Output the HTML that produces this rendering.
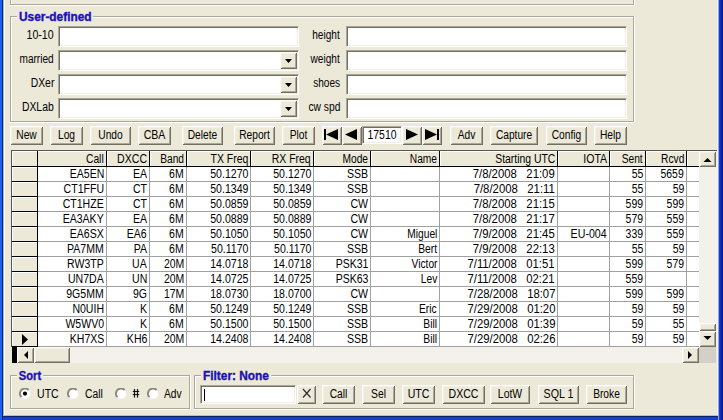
<!DOCTYPE html>
<html><head><meta charset="utf-8"><style>
html,body{margin:0;padding:0}
body{width:723px;height:420px;overflow:hidden;position:relative;background:#ECE9D8;font-family:"Liberation Sans",sans-serif;font-size:12px;color:#000}
div{position:absolute;box-sizing:content-box}
.t{white-space:nowrap}
.b{font-weight:bold;font-size:12px;-webkit-text-stroke:0.35px #1A10B8;transform-origin:0 50%}
</style></head><body>
<div style="left:0px;top:0px;width:2px;height:420px;background:#1B62F0"></div>
<div style="left:2px;top:0px;width:1px;height:420px;background:#0A266E"></div>
<div style="left:3px;top:0px;width:1px;height:416px;background:#A8B0C8"></div>
<div style="left:4px;top:0px;width:1px;height:415px;background:#fff"></div>
<div style="left:717px;top:0px;width:1px;height:416px;background:#F4F6FC"></div>
<div style="left:718px;top:0px;width:1px;height:420px;background:#8CA4EC"></div>
<div style="left:719px;top:0;width:4px;height:420px;background:linear-gradient(to right,#1E44CC,#001090)"></div>
<div style="left:3px;top:415px;width:715px;height:1px;background:#B8BCC8"></div>
<div style="left:3px;top:416px;width:715px;height:1px;background:#0A1F6E"></div>
<div style="left:3px;top:417px;width:715px;height:3px;background:#1A40C8"></div>
<div style="left:10px;top:-10px;width:624px;height:1px;background:#ACA899"></div>
<div style="left:10px;top:-10px;width:1px;height:15px;background:#ACA899"></div>
<div style="left:10px;top:4px;width:624px;height:1px;background:#ACA899"></div>
<div style="left:633px;top:-10px;width:1px;height:15px;background:#ACA899"></div>
<div style="left:11px;top:-9px;width:622px;height:1px;background:#fff"></div>
<div style="left:11px;top:-9px;width:1px;height:13px;background:#fff"></div>
<div style="left:10px;top:5px;width:625px;height:1px;background:#fff"></div>
<div style="left:634px;top:-10px;width:1px;height:16px;background:#fff"></div>
<div style="left:10px;top:16px;width:624px;height:1px;background:#ACA899"></div>
<div style="left:10px;top:16px;width:1px;height:106px;background:#ACA899"></div>
<div style="left:10px;top:121px;width:624px;height:1px;background:#ACA899"></div>
<div style="left:633px;top:16px;width:1px;height:106px;background:#ACA899"></div>
<div style="left:11px;top:17px;width:622px;height:1px;background:#fff"></div>
<div style="left:11px;top:17px;width:1px;height:104px;background:#fff"></div>
<div style="left:10px;top:122px;width:625px;height:1px;background:#fff"></div>
<div style="left:634px;top:16px;width:1px;height:107px;background:#fff"></div>
<div class="t b" style="left:17px;top:10px;padding:0 2px;line-height:14px;transform:scaleX(0.99);background:#ECE9D8;color:#1A10B8">User-defined</div>
<div class="t" style="right:669px;top:29px;line-height:13px;text-align:right;transform:scaleX(0.887);transform-origin:100% 50%;">10-10</div>
<div style="left:58px;top:26px;width:237px;height:17px;background:#fff;border-style:solid;border-width:1px;border-color:#ACA899 #fff #fff #ACA899;box-shadow:inset 1px 1px 0 #716F64, inset -1px -1px 0 #F1EFE2;padding:1px"></div>
<div class="t" style="right:383px;top:29px;line-height:13px;text-align:right;transform:scaleX(0.840);transform-origin:100% 50%;">height</div>
<div style="left:346px;top:26px;width:277px;height:17px;background:#fff;border-style:solid;border-width:1px;border-color:#ACA899 #fff #fff #ACA899;box-shadow:inset 1px 1px 0 #716F64, inset -1px -1px 0 #F1EFE2;padding:1px"></div>
<div class="t" style="right:669px;top:53px;line-height:13px;text-align:right;transform:scaleX(0.840);transform-origin:100% 50%;">married</div>
<div style="left:58px;top:50px;width:237px;height:17px;background:#fff;border-style:solid;border-width:1px;border-color:#ACA899 #fff #fff #ACA899;box-shadow:inset 1px 1px 0 #716F64, inset -1px -1px 0 #F1EFE2;padding:1px"></div>
<div style="left:280px;top:52px;width:17px;height:17px;background:#ECE9D8;box-shadow:inset 1px 1px 0 #fff, inset -1px -1px 0 #716F64, inset 2px 2px 0 #F1EFE2, inset -2px -2px 0 #ACA899"></div>
<svg style="position:absolute;left:285px;top:59px" width="7" height="4"><polygon points="0,0 7,0 3.5,4" fill="#000"/></svg>
<div class="t" style="right:383px;top:53px;line-height:13px;text-align:right;transform:scaleX(0.840);transform-origin:100% 50%;">weight</div>
<div style="left:346px;top:50px;width:277px;height:17px;background:#fff;border-style:solid;border-width:1px;border-color:#ACA899 #fff #fff #ACA899;box-shadow:inset 1px 1px 0 #716F64, inset -1px -1px 0 #F1EFE2;padding:1px"></div>
<div class="t" style="right:669px;top:77px;line-height:13px;text-align:right;transform:scaleX(0.864);transform-origin:100% 50%;">DXer</div>
<div style="left:58px;top:74px;width:237px;height:17px;background:#fff;border-style:solid;border-width:1px;border-color:#ACA899 #fff #fff #ACA899;box-shadow:inset 1px 1px 0 #716F64, inset -1px -1px 0 #F1EFE2;padding:1px"></div>
<div style="left:280px;top:76px;width:17px;height:17px;background:#ECE9D8;box-shadow:inset 1px 1px 0 #fff, inset -1px -1px 0 #716F64, inset 2px 2px 0 #F1EFE2, inset -2px -2px 0 #ACA899"></div>
<svg style="position:absolute;left:285px;top:83px" width="7" height="4"><polygon points="0,0 7,0 3.5,4" fill="#000"/></svg>
<div class="t" style="right:383px;top:77px;line-height:13px;text-align:right;transform:scaleX(0.840);transform-origin:100% 50%;">shoes</div>
<div style="left:346px;top:74px;width:277px;height:17px;background:#fff;border-style:solid;border-width:1px;border-color:#ACA899 #fff #fff #ACA899;box-shadow:inset 1px 1px 0 #716F64, inset -1px -1px 0 #F1EFE2;padding:1px"></div>
<div class="t" style="right:669px;top:101px;line-height:13px;text-align:right;transform:scaleX(0.865);transform-origin:100% 50%;">DXLab</div>
<div style="left:58px;top:98px;width:237px;height:17px;background:#fff;border-style:solid;border-width:1px;border-color:#ACA899 #fff #fff #ACA899;box-shadow:inset 1px 1px 0 #716F64, inset -1px -1px 0 #F1EFE2;padding:1px"></div>
<div style="left:280px;top:100px;width:17px;height:17px;background:#ECE9D8;box-shadow:inset 1px 1px 0 #fff, inset -1px -1px 0 #716F64, inset 2px 2px 0 #F1EFE2, inset -2px -2px 0 #ACA899"></div>
<svg style="position:absolute;left:285px;top:107px" width="7" height="4"><polygon points="0,0 7,0 3.5,4" fill="#000"/></svg>
<div class="t" style="right:383px;top:101px;line-height:13px;text-align:right;transform:scaleX(0.854);transform-origin:100% 50%;">cw spd</div>
<div style="left:346px;top:98px;width:277px;height:17px;background:#fff;border-style:solid;border-width:1px;border-color:#ACA899 #fff #fff #ACA899;box-shadow:inset 1px 1px 0 #716F64, inset -1px -1px 0 #F1EFE2;padding:1px"></div>
<div style="left:10px;top:126px;width:33px;height:19px;background:#ECE9D8;box-shadow:inset 1px 1px 0 #fff, inset -1px -1px 0 #716F64, inset 2px 2px 0 #F1EFE2, inset -2px -2px 0 #ACA899"></div>
<div class="t" style="left:10px;top:129px;width:33px;line-height:13px;text-align:center;transform:scaleX(0.854);">New</div>
<div style="left:50px;top:126px;width:33px;height:19px;background:#ECE9D8;box-shadow:inset 1px 1px 0 #fff, inset -1px -1px 0 #716F64, inset 2px 2px 0 #F1EFE2, inset -2px -2px 0 #ACA899"></div>
<div class="t" style="left:50px;top:129px;width:33px;line-height:13px;text-align:center;transform:scaleX(0.853);">Log</div>
<div style="left:90px;top:126px;width:41px;height:19px;background:#ECE9D8;box-shadow:inset 1px 1px 0 #fff, inset -1px -1px 0 #716F64, inset 2px 2px 0 #F1EFE2, inset -2px -2px 0 #ACA899"></div>
<div class="t" style="left:90px;top:129px;width:41px;line-height:13px;text-align:center;transform:scaleX(0.852);">Undo</div>
<div style="left:138px;top:126px;width:33px;height:19px;background:#ECE9D8;box-shadow:inset 1px 1px 0 #fff, inset -1px -1px 0 #716F64, inset 2px 2px 0 #F1EFE2, inset -2px -2px 0 #ACA899"></div>
<div class="t" style="left:138px;top:129px;width:33px;line-height:13px;text-align:center;transform:scaleX(0.880);">CBA</div>
<div style="left:182px;top:126px;width:41px;height:19px;background:#ECE9D8;box-shadow:inset 1px 1px 0 #fff, inset -1px -1px 0 #716F64, inset 2px 2px 0 #F1EFE2, inset -2px -2px 0 #ACA899"></div>
<div class="t" style="left:182px;top:129px;width:41px;line-height:13px;text-align:center;transform:scaleX(0.850);">Delete</div>
<div style="left:234px;top:126px;width:41px;height:19px;background:#ECE9D8;box-shadow:inset 1px 1px 0 #fff, inset -1px -1px 0 #716F64, inset 2px 2px 0 #F1EFE2, inset -2px -2px 0 #ACA899"></div>
<div class="t" style="left:234px;top:129px;width:41px;line-height:13px;text-align:center;transform:scaleX(0.850);">Report</div>
<div style="left:282px;top:126px;width:33px;height:19px;background:#ECE9D8;box-shadow:inset 1px 1px 0 #fff, inset -1px -1px 0 #716F64, inset 2px 2px 0 #F1EFE2, inset -2px -2px 0 #ACA899"></div>
<div class="t" style="left:282px;top:129px;width:33px;line-height:13px;text-align:center;transform:scaleX(0.855);">Plot</div>
<div style="left:450px;top:126px;width:33px;height:19px;background:#ECE9D8;box-shadow:inset 1px 1px 0 #fff, inset -1px -1px 0 #716F64, inset 2px 2px 0 #F1EFE2, inset -2px -2px 0 #ACA899"></div>
<div class="t" style="left:450px;top:129px;width:33px;line-height:13px;text-align:center;transform:scaleX(0.855);">Adv</div>
<div style="left:490px;top:126px;width:48px;height:19px;background:#ECE9D8;box-shadow:inset 1px 1px 0 #fff, inset -1px -1px 0 #716F64, inset 2px 2px 0 #F1EFE2, inset -2px -2px 0 #ACA899"></div>
<div class="t" style="left:490px;top:129px;width:48px;line-height:13px;text-align:center;transform:scaleX(0.848);">Capture</div>
<div style="left:546px;top:126px;width:41px;height:19px;background:#ECE9D8;box-shadow:inset 1px 1px 0 #fff, inset -1px -1px 0 #716F64, inset 2px 2px 0 #F1EFE2, inset -2px -2px 0 #ACA899"></div>
<div class="t" style="left:546px;top:129px;width:41px;line-height:13px;text-align:center;transform:scaleX(0.850);">Config</div>
<div style="left:594px;top:126px;width:33px;height:19px;background:#ECE9D8;box-shadow:inset 1px 1px 0 #fff, inset -1px -1px 0 #716F64, inset 2px 2px 0 #F1EFE2, inset -2px -2px 0 #ACA899"></div>
<div class="t" style="left:594px;top:129px;width:33px;line-height:13px;text-align:center;transform:scaleX(0.854);">Help</div>
<div style="left:322px;top:126px;width:20px;height:19px;background:#ECE9D8;box-shadow:inset 1px 1px 0 #fff, inset -1px -1px 0 #716F64, inset 2px 2px 0 #F1EFE2, inset -2px -2px 0 #ACA899"></div>
<div style="left:342px;top:126px;width:20px;height:19px;background:#ECE9D8;box-shadow:inset 1px 1px 0 #fff, inset -1px -1px 0 #716F64, inset 2px 2px 0 #F1EFE2, inset -2px -2px 0 #ACA899"></div>
<div style="left:362px;top:126px;width:36px;height:14px;background:#fff;border-style:solid;border-width:1px;border-color:#ACA899 #fff #fff #ACA899;box-shadow:inset 1px 1px 0 #716F64, inset -1px -1px 0 #F1EFE2;padding:1px"></div>
<div class="t" style="left:362px;top:129px;width:40px;line-height:13px;text-align:center;transform:scaleX(0.870);">17510</div>
<div style="left:402px;top:126px;width:20px;height:19px;background:#ECE9D8;box-shadow:inset 1px 1px 0 #fff, inset -1px -1px 0 #716F64, inset 2px 2px 0 #F1EFE2, inset -2px -2px 0 #ACA899"></div>
<div style="left:422px;top:126px;width:20px;height:19px;background:#ECE9D8;box-shadow:inset 1px 1px 0 #fff, inset -1px -1px 0 #716F64, inset 2px 2px 0 #F1EFE2, inset -2px -2px 0 #ACA899"></div>
<svg style="position:absolute;left:0;top:0" width="723" height="420"><rect x="324" y="129" width="2" height="11" fill="#000"/><polygon points="326,134.5 338,129 338,140" fill="#000"/><polygon points="345,134.5 357,129 357,140" fill="#000"/><polygon points="418,134.5 406,129 406,140" fill="#000"/><polygon points="437,134.5 425,129 425,140" fill="#000"/><rect x="437" y="129" width="2" height="11" fill="#000"/></svg>
<div style="left:38px;top:167px;width:661px;height:180px;background:#fff"></div>
<div style="left:12px;top:151px;width:687px;height:15px;background:#ECE9D8"></div>
<div style="left:12px;top:167px;width:25px;height:180px;background:#ECE9D8"></div>
<div style="left:11px;top:150px;width:706px;height:1px;background:#555"></div>
<div style="left:11px;top:150px;width:1px;height:197px;background:#555"></div>
<div style="left:12px;top:151px;width:687px;height:1px;background:#fff"></div>
<div style="left:12px;top:151px;width:1px;height:196px;background:#fff"></div>
<div style="left:12px;top:167px;width:25px;height:1px;background:#fff"></div>
<div style="left:12px;top:182px;width:25px;height:1px;background:#fff"></div>
<div style="left:12px;top:197px;width:25px;height:1px;background:#fff"></div>
<div style="left:12px;top:212px;width:25px;height:1px;background:#fff"></div>
<div style="left:12px;top:227px;width:25px;height:1px;background:#fff"></div>
<div style="left:12px;top:242px;width:25px;height:1px;background:#fff"></div>
<div style="left:12px;top:257px;width:25px;height:1px;background:#fff"></div>
<div style="left:12px;top:272px;width:25px;height:1px;background:#fff"></div>
<div style="left:12px;top:287px;width:25px;height:1px;background:#fff"></div>
<div style="left:12px;top:302px;width:25px;height:1px;background:#fff"></div>
<div style="left:12px;top:317px;width:25px;height:1px;background:#fff"></div>
<div style="left:12px;top:332px;width:25px;height:1px;background:#fff"></div>
<div style="left:38px;top:181px;width:661px;height:1px;background:#A0A0A0"></div>
<div style="left:12px;top:181px;width:26px;height:1px;background:#000"></div>
<div style="left:38px;top:196px;width:661px;height:1px;background:#A0A0A0"></div>
<div style="left:12px;top:196px;width:26px;height:1px;background:#000"></div>
<div style="left:38px;top:211px;width:661px;height:1px;background:#A0A0A0"></div>
<div style="left:12px;top:211px;width:26px;height:1px;background:#000"></div>
<div style="left:38px;top:226px;width:661px;height:1px;background:#A0A0A0"></div>
<div style="left:12px;top:226px;width:26px;height:1px;background:#000"></div>
<div style="left:38px;top:241px;width:661px;height:1px;background:#A0A0A0"></div>
<div style="left:12px;top:241px;width:26px;height:1px;background:#000"></div>
<div style="left:38px;top:256px;width:661px;height:1px;background:#A0A0A0"></div>
<div style="left:12px;top:256px;width:26px;height:1px;background:#000"></div>
<div style="left:38px;top:271px;width:661px;height:1px;background:#A0A0A0"></div>
<div style="left:12px;top:271px;width:26px;height:1px;background:#000"></div>
<div style="left:38px;top:286px;width:661px;height:1px;background:#A0A0A0"></div>
<div style="left:12px;top:286px;width:26px;height:1px;background:#000"></div>
<div style="left:38px;top:301px;width:661px;height:1px;background:#A0A0A0"></div>
<div style="left:12px;top:301px;width:26px;height:1px;background:#000"></div>
<div style="left:38px;top:316px;width:661px;height:1px;background:#A0A0A0"></div>
<div style="left:12px;top:316px;width:26px;height:1px;background:#000"></div>
<div style="left:38px;top:331px;width:661px;height:1px;background:#A0A0A0"></div>
<div style="left:12px;top:331px;width:26px;height:1px;background:#000"></div>
<div style="left:38px;top:346px;width:661px;height:1px;background:#A0A0A0"></div>
<div style="left:12px;top:346px;width:26px;height:1px;background:#000"></div>
<div style="left:12px;top:166px;width:687px;height:1px;background:#000"></div>
<div style="left:37px;top:151px;width:1px;height:196px;background:#000"></div>
<div style="left:106px;top:151px;width:1px;height:15px;background:#000"></div>
<div style="left:107px;top:151px;width:1px;height:15px;background:#fff"></div>
<div style="left:106px;top:167px;width:1px;height:180px;background:#A0A0A0"></div>
<div style="left:149px;top:151px;width:1px;height:15px;background:#000"></div>
<div style="left:150px;top:151px;width:1px;height:15px;background:#fff"></div>
<div style="left:149px;top:167px;width:1px;height:180px;background:#A0A0A0"></div>
<div style="left:186px;top:151px;width:1px;height:15px;background:#000"></div>
<div style="left:187px;top:151px;width:1px;height:15px;background:#fff"></div>
<div style="left:186px;top:167px;width:1px;height:180px;background:#A0A0A0"></div>
<div style="left:250px;top:151px;width:1px;height:15px;background:#000"></div>
<div style="left:251px;top:151px;width:1px;height:15px;background:#fff"></div>
<div style="left:250px;top:167px;width:1px;height:180px;background:#A0A0A0"></div>
<div style="left:313px;top:151px;width:1px;height:15px;background:#000"></div>
<div style="left:314px;top:151px;width:1px;height:15px;background:#fff"></div>
<div style="left:313px;top:167px;width:1px;height:180px;background:#A0A0A0"></div>
<div style="left:370px;top:151px;width:1px;height:15px;background:#000"></div>
<div style="left:371px;top:151px;width:1px;height:15px;background:#fff"></div>
<div style="left:370px;top:167px;width:1px;height:180px;background:#A0A0A0"></div>
<div style="left:439px;top:151px;width:1px;height:15px;background:#000"></div>
<div style="left:440px;top:151px;width:1px;height:15px;background:#fff"></div>
<div style="left:439px;top:167px;width:1px;height:180px;background:#A0A0A0"></div>
<div style="left:557px;top:151px;width:1px;height:15px;background:#000"></div>
<div style="left:558px;top:151px;width:1px;height:15px;background:#fff"></div>
<div style="left:557px;top:167px;width:1px;height:180px;background:#A0A0A0"></div>
<div style="left:609px;top:151px;width:1px;height:15px;background:#000"></div>
<div style="left:610px;top:151px;width:1px;height:15px;background:#fff"></div>
<div style="left:609px;top:167px;width:1px;height:180px;background:#A0A0A0"></div>
<div style="left:645px;top:151px;width:1px;height:15px;background:#000"></div>
<div style="left:646px;top:151px;width:1px;height:15px;background:#fff"></div>
<div style="left:645px;top:167px;width:1px;height:180px;background:#A0A0A0"></div>
<div style="left:686px;top:151px;width:1px;height:15px;background:#000"></div>
<div style="left:687px;top:151px;width:1px;height:15px;background:#fff"></div>
<div style="left:686px;top:167px;width:1px;height:180px;background:#A0A0A0"></div>
<div class="t" style="right:619px;top:153px;line-height:13px;text-align:right;transform:scaleX(0.857);transform-origin:100% 50%;">Call</div>
<div class="t" style="right:576px;top:153px;line-height:13px;text-align:right;transform:scaleX(0.880);transform-origin:100% 50%;">DXCC</div>
<div class="t" style="right:539px;top:153px;line-height:13px;text-align:right;transform:scaleX(0.851);transform-origin:100% 50%;">Band</div>
<div class="t" style="right:475px;top:153px;line-height:13px;text-align:right;transform:scaleX(0.873);transform-origin:100% 50%;">TX Freq</div>
<div class="t" style="right:412px;top:153px;line-height:13px;text-align:right;transform:scaleX(0.873);transform-origin:100% 50%;">RX Freq</div>
<div class="t" style="right:355px;top:153px;line-height:13px;text-align:right;transform:scaleX(0.853);transform-origin:100% 50%;">Mode</div>
<div class="t" style="right:286px;top:153px;line-height:13px;text-align:right;transform:scaleX(0.851);transform-origin:100% 50%;">Name</div>
<div class="t" style="right:168px;top:153px;line-height:13px;text-align:right;transform:scaleX(0.867);transform-origin:100% 50%;">Starting UTC</div>
<div class="t" style="right:116px;top:153px;line-height:13px;text-align:right;transform:scaleX(0.880);transform-origin:100% 50%;">IOTA</div>
<div class="t" style="right:80px;top:153px;line-height:13px;text-align:right;transform:scaleX(0.853);transform-origin:100% 50%;">Sent</div>
<div class="t" style="right:39px;top:153px;line-height:13px;text-align:right;transform:scaleX(0.853);transform-origin:100% 50%;">Rcvd</div>
<div class="t" style="right:619px;top:168px;line-height:13px;text-align:right;transform:scaleX(0.878);transform-origin:100% 50%;">EA5EN</div>
<div class="t" style="right:576px;top:168px;line-height:13px;text-align:right;transform:scaleX(0.880);transform-origin:100% 50%;">EA</div>
<div class="t" style="right:539px;top:168px;line-height:13px;text-align:right;transform:scaleX(0.876);transform-origin:100% 50%;">6M</div>
<div class="t" style="right:475px;top:168px;line-height:13px;text-align:right;transform:scaleX(0.880);transform-origin:100% 50%;">50.1270</div>
<div class="t" style="right:412px;top:168px;line-height:13px;text-align:right;transform:scaleX(0.880);transform-origin:100% 50%;">50.1270</div>
<div class="t" style="right:355px;top:168px;line-height:13px;text-align:right;transform:scaleX(0.880);transform-origin:100% 50%;">SSB</div>
<div class="t" style="right:168px;top:168px;line-height:13px;text-align:right;transform:scaleX(0.946);transform-origin:100% 50%;">7/8/2008&nbsp;&nbsp; 21:09</div>
<div class="t" style="right:80px;top:168px;line-height:13px;text-align:right;transform:scaleX(0.870);transform-origin:100% 50%;">55</div>
<div class="t" style="right:39px;top:168px;line-height:13px;text-align:right;transform:scaleX(0.870);transform-origin:100% 50%;">5659</div>
<div class="t" style="right:619px;top:183px;line-height:13px;text-align:right;transform:scaleX(0.879);transform-origin:100% 50%;">CT1FFU</div>
<div class="t" style="right:576px;top:183px;line-height:13px;text-align:right;transform:scaleX(0.880);transform-origin:100% 50%;">CT</div>
<div class="t" style="right:539px;top:183px;line-height:13px;text-align:right;transform:scaleX(0.876);transform-origin:100% 50%;">6M</div>
<div class="t" style="right:475px;top:183px;line-height:13px;text-align:right;transform:scaleX(0.880);transform-origin:100% 50%;">50.1349</div>
<div class="t" style="right:412px;top:183px;line-height:13px;text-align:right;transform:scaleX(0.880);transform-origin:100% 50%;">50.1349</div>
<div class="t" style="right:355px;top:183px;line-height:13px;text-align:right;transform:scaleX(0.880);transform-origin:100% 50%;">SSB</div>
<div class="t" style="right:168px;top:183px;line-height:13px;text-align:right;transform:scaleX(0.946);transform-origin:100% 50%;">7/8/2008&nbsp;&nbsp; 21:11</div>
<div class="t" style="right:80px;top:183px;line-height:13px;text-align:right;transform:scaleX(0.870);transform-origin:100% 50%;">55</div>
<div class="t" style="right:39px;top:183px;line-height:13px;text-align:right;transform:scaleX(0.870);transform-origin:100% 50%;">59</div>
<div class="t" style="right:619px;top:198px;line-height:13px;text-align:right;transform:scaleX(0.879);transform-origin:100% 50%;">CT1HZE</div>
<div class="t" style="right:576px;top:198px;line-height:13px;text-align:right;transform:scaleX(0.880);transform-origin:100% 50%;">CT</div>
<div class="t" style="right:539px;top:198px;line-height:13px;text-align:right;transform:scaleX(0.876);transform-origin:100% 50%;">6M</div>
<div class="t" style="right:475px;top:198px;line-height:13px;text-align:right;transform:scaleX(0.880);transform-origin:100% 50%;">50.0859</div>
<div class="t" style="right:412px;top:198px;line-height:13px;text-align:right;transform:scaleX(0.880);transform-origin:100% 50%;">50.0859</div>
<div class="t" style="right:355px;top:198px;line-height:13px;text-align:right;transform:scaleX(0.880);transform-origin:100% 50%;">CW</div>
<div class="t" style="right:168px;top:198px;line-height:13px;text-align:right;transform:scaleX(0.946);transform-origin:100% 50%;">7/8/2008&nbsp;&nbsp; 21:15</div>
<div class="t" style="right:80px;top:198px;line-height:13px;text-align:right;transform:scaleX(0.870);transform-origin:100% 50%;">599</div>
<div class="t" style="right:39px;top:198px;line-height:13px;text-align:right;transform:scaleX(0.870);transform-origin:100% 50%;">599</div>
<div class="t" style="right:619px;top:213px;line-height:13px;text-align:right;transform:scaleX(0.879);transform-origin:100% 50%;">EA3AKY</div>
<div class="t" style="right:576px;top:213px;line-height:13px;text-align:right;transform:scaleX(0.880);transform-origin:100% 50%;">EA</div>
<div class="t" style="right:539px;top:213px;line-height:13px;text-align:right;transform:scaleX(0.876);transform-origin:100% 50%;">6M</div>
<div class="t" style="right:475px;top:213px;line-height:13px;text-align:right;transform:scaleX(0.880);transform-origin:100% 50%;">50.0889</div>
<div class="t" style="right:412px;top:213px;line-height:13px;text-align:right;transform:scaleX(0.880);transform-origin:100% 50%;">50.0889</div>
<div class="t" style="right:355px;top:213px;line-height:13px;text-align:right;transform:scaleX(0.880);transform-origin:100% 50%;">CW</div>
<div class="t" style="right:168px;top:213px;line-height:13px;text-align:right;transform:scaleX(0.946);transform-origin:100% 50%;">7/8/2008&nbsp;&nbsp; 21:17</div>
<div class="t" style="right:80px;top:213px;line-height:13px;text-align:right;transform:scaleX(0.870);transform-origin:100% 50%;">579</div>
<div class="t" style="right:39px;top:213px;line-height:13px;text-align:right;transform:scaleX(0.870);transform-origin:100% 50%;">559</div>
<div class="t" style="right:619px;top:228px;line-height:13px;text-align:right;transform:scaleX(0.878);transform-origin:100% 50%;">EA6SX</div>
<div class="t" style="right:576px;top:228px;line-height:13px;text-align:right;transform:scaleX(0.877);transform-origin:100% 50%;">EA6</div>
<div class="t" style="right:539px;top:228px;line-height:13px;text-align:right;transform:scaleX(0.876);transform-origin:100% 50%;">6M</div>
<div class="t" style="right:475px;top:228px;line-height:13px;text-align:right;transform:scaleX(0.880);transform-origin:100% 50%;">50.1050</div>
<div class="t" style="right:412px;top:228px;line-height:13px;text-align:right;transform:scaleX(0.880);transform-origin:100% 50%;">50.1050</div>
<div class="t" style="right:355px;top:228px;line-height:13px;text-align:right;transform:scaleX(0.880);transform-origin:100% 50%;">CW</div>
<div class="t" style="right:286px;top:228px;line-height:13px;text-align:right;transform:scaleX(0.851);transform-origin:100% 50%;">Miguel</div>
<div class="t" style="right:168px;top:228px;line-height:13px;text-align:right;transform:scaleX(0.946);transform-origin:100% 50%;">7/9/2008&nbsp;&nbsp; 21:45</div>
<div class="t" style="right:116px;top:228px;line-height:13px;text-align:right;transform:scaleX(0.887);transform-origin:100% 50%;">EU-004</div>
<div class="t" style="right:80px;top:228px;line-height:13px;text-align:right;transform:scaleX(0.870);transform-origin:100% 50%;">339</div>
<div class="t" style="right:39px;top:228px;line-height:13px;text-align:right;transform:scaleX(0.870);transform-origin:100% 50%;">559</div>
<div class="t" style="right:619px;top:243px;line-height:13px;text-align:right;transform:scaleX(0.878);transform-origin:100% 50%;">PA7MM</div>
<div class="t" style="right:576px;top:243px;line-height:13px;text-align:right;transform:scaleX(0.880);transform-origin:100% 50%;">PA</div>
<div class="t" style="right:539px;top:243px;line-height:13px;text-align:right;transform:scaleX(0.876);transform-origin:100% 50%;">6M</div>
<div class="t" style="right:475px;top:243px;line-height:13px;text-align:right;transform:scaleX(0.880);transform-origin:100% 50%;">50.1170</div>
<div class="t" style="right:412px;top:243px;line-height:13px;text-align:right;transform:scaleX(0.880);transform-origin:100% 50%;">50.1170</div>
<div class="t" style="right:355px;top:243px;line-height:13px;text-align:right;transform:scaleX(0.880);transform-origin:100% 50%;">SSB</div>
<div class="t" style="right:286px;top:243px;line-height:13px;text-align:right;transform:scaleX(0.855);transform-origin:100% 50%;">Bert</div>
<div class="t" style="right:168px;top:243px;line-height:13px;text-align:right;transform:scaleX(0.946);transform-origin:100% 50%;">7/9/2008&nbsp;&nbsp; 22:13</div>
<div class="t" style="right:80px;top:243px;line-height:13px;text-align:right;transform:scaleX(0.870);transform-origin:100% 50%;">55</div>
<div class="t" style="right:39px;top:243px;line-height:13px;text-align:right;transform:scaleX(0.870);transform-origin:100% 50%;">59</div>
<div class="t" style="right:619px;top:258px;line-height:13px;text-align:right;transform:scaleX(0.878);transform-origin:100% 50%;">RW3TP</div>
<div class="t" style="right:576px;top:258px;line-height:13px;text-align:right;transform:scaleX(0.880);transform-origin:100% 50%;">UA</div>
<div class="t" style="right:539px;top:258px;line-height:13px;text-align:right;transform:scaleX(0.874);transform-origin:100% 50%;">20M</div>
<div class="t" style="right:475px;top:258px;line-height:13px;text-align:right;transform:scaleX(0.880);transform-origin:100% 50%;">14.0718</div>
<div class="t" style="right:412px;top:258px;line-height:13px;text-align:right;transform:scaleX(0.880);transform-origin:100% 50%;">14.0718</div>
<div class="t" style="right:355px;top:258px;line-height:13px;text-align:right;transform:scaleX(0.876);transform-origin:100% 50%;">PSK31</div>
<div class="t" style="right:286px;top:258px;line-height:13px;text-align:right;transform:scaleX(0.850);transform-origin:100% 50%;">Victor</div>
<div class="t" style="right:168px;top:258px;line-height:13px;text-align:right;transform:scaleX(0.941);transform-origin:100% 50%;">7/11/2008&nbsp;&nbsp; 01:51</div>
<div class="t" style="right:80px;top:258px;line-height:13px;text-align:right;transform:scaleX(0.870);transform-origin:100% 50%;">599</div>
<div class="t" style="right:39px;top:258px;line-height:13px;text-align:right;transform:scaleX(0.870);transform-origin:100% 50%;">579</div>
<div class="t" style="right:619px;top:273px;line-height:13px;text-align:right;transform:scaleX(0.878);transform-origin:100% 50%;">UN7DA</div>
<div class="t" style="right:576px;top:273px;line-height:13px;text-align:right;transform:scaleX(0.880);transform-origin:100% 50%;">UN</div>
<div class="t" style="right:539px;top:273px;line-height:13px;text-align:right;transform:scaleX(0.874);transform-origin:100% 50%;">20M</div>
<div class="t" style="right:475px;top:273px;line-height:13px;text-align:right;transform:scaleX(0.880);transform-origin:100% 50%;">14.0725</div>
<div class="t" style="right:412px;top:273px;line-height:13px;text-align:right;transform:scaleX(0.880);transform-origin:100% 50%;">14.0725</div>
<div class="t" style="right:355px;top:273px;line-height:13px;text-align:right;transform:scaleX(0.876);transform-origin:100% 50%;">PSK63</div>
<div class="t" style="right:286px;top:273px;line-height:13px;text-align:right;transform:scaleX(0.854);transform-origin:100% 50%;">Lev</div>
<div class="t" style="right:168px;top:273px;line-height:13px;text-align:right;transform:scaleX(0.941);transform-origin:100% 50%;">7/11/2008&nbsp;&nbsp; 02:21</div>
<div class="t" style="right:80px;top:273px;line-height:13px;text-align:right;transform:scaleX(0.870);transform-origin:100% 50%;">559</div>
<div class="t" style="right:619px;top:288px;line-height:13px;text-align:right;transform:scaleX(0.877);transform-origin:100% 50%;">9G5MM</div>
<div class="t" style="right:576px;top:288px;line-height:13px;text-align:right;transform:scaleX(0.876);transform-origin:100% 50%;">9G</div>
<div class="t" style="right:539px;top:288px;line-height:13px;text-align:right;transform:scaleX(0.874);transform-origin:100% 50%;">17M</div>
<div class="t" style="right:475px;top:288px;line-height:13px;text-align:right;transform:scaleX(0.880);transform-origin:100% 50%;">18.0730</div>
<div class="t" style="right:412px;top:288px;line-height:13px;text-align:right;transform:scaleX(0.880);transform-origin:100% 50%;">18.0700</div>
<div class="t" style="right:355px;top:288px;line-height:13px;text-align:right;transform:scaleX(0.880);transform-origin:100% 50%;">CW</div>
<div class="t" style="right:168px;top:288px;line-height:13px;text-align:right;transform:scaleX(0.941);transform-origin:100% 50%;">7/28/2008&nbsp;&nbsp; 18:07</div>
<div class="t" style="right:80px;top:288px;line-height:13px;text-align:right;transform:scaleX(0.870);transform-origin:100% 50%;">599</div>
<div class="t" style="right:39px;top:288px;line-height:13px;text-align:right;transform:scaleX(0.870);transform-origin:100% 50%;">599</div>
<div class="t" style="right:619px;top:303px;line-height:13px;text-align:right;transform:scaleX(0.878);transform-origin:100% 50%;">N0UIH</div>
<div class="t" style="right:576px;top:303px;line-height:13px;text-align:right;transform:scaleX(0.880);transform-origin:100% 50%;">K</div>
<div class="t" style="right:539px;top:303px;line-height:13px;text-align:right;transform:scaleX(0.876);transform-origin:100% 50%;">6M</div>
<div class="t" style="right:475px;top:303px;line-height:13px;text-align:right;transform:scaleX(0.880);transform-origin:100% 50%;">50.1249</div>
<div class="t" style="right:412px;top:303px;line-height:13px;text-align:right;transform:scaleX(0.880);transform-origin:100% 50%;">50.1249</div>
<div class="t" style="right:355px;top:303px;line-height:13px;text-align:right;transform:scaleX(0.880);transform-origin:100% 50%;">SSB</div>
<div class="t" style="right:286px;top:303px;line-height:13px;text-align:right;transform:scaleX(0.855);transform-origin:100% 50%;">Eric</div>
<div class="t" style="right:168px;top:303px;line-height:13px;text-align:right;transform:scaleX(0.941);transform-origin:100% 50%;">7/29/2008&nbsp;&nbsp; 01:20</div>
<div class="t" style="right:80px;top:303px;line-height:13px;text-align:right;transform:scaleX(0.870);transform-origin:100% 50%;">59</div>
<div class="t" style="right:39px;top:303px;line-height:13px;text-align:right;transform:scaleX(0.870);transform-origin:100% 50%;">59</div>
<div class="t" style="right:619px;top:318px;line-height:13px;text-align:right;transform:scaleX(0.877);transform-origin:100% 50%;">W5WV0</div>
<div class="t" style="right:576px;top:318px;line-height:13px;text-align:right;transform:scaleX(0.880);transform-origin:100% 50%;">K</div>
<div class="t" style="right:539px;top:318px;line-height:13px;text-align:right;transform:scaleX(0.876);transform-origin:100% 50%;">6M</div>
<div class="t" style="right:475px;top:318px;line-height:13px;text-align:right;transform:scaleX(0.880);transform-origin:100% 50%;">50.1500</div>
<div class="t" style="right:412px;top:318px;line-height:13px;text-align:right;transform:scaleX(0.880);transform-origin:100% 50%;">50.1500</div>
<div class="t" style="right:355px;top:318px;line-height:13px;text-align:right;transform:scaleX(0.880);transform-origin:100% 50%;">SSB</div>
<div class="t" style="right:286px;top:318px;line-height:13px;text-align:right;transform:scaleX(0.860);transform-origin:100% 50%;">Bill</div>
<div class="t" style="right:168px;top:318px;line-height:13px;text-align:right;transform:scaleX(0.941);transform-origin:100% 50%;">7/29/2008&nbsp;&nbsp; 01:39</div>
<div class="t" style="right:80px;top:318px;line-height:13px;text-align:right;transform:scaleX(0.870);transform-origin:100% 50%;">59</div>
<div class="t" style="right:39px;top:318px;line-height:13px;text-align:right;transform:scaleX(0.870);transform-origin:100% 50%;">55</div>
<div class="t" style="right:619px;top:333px;line-height:13px;text-align:right;transform:scaleX(0.878);transform-origin:100% 50%;">KH7XS</div>
<div class="t" style="right:576px;top:333px;line-height:13px;text-align:right;transform:scaleX(0.877);transform-origin:100% 50%;">KH6</div>
<div class="t" style="right:539px;top:333px;line-height:13px;text-align:right;transform:scaleX(0.874);transform-origin:100% 50%;">20M</div>
<div class="t" style="right:475px;top:333px;line-height:13px;text-align:right;transform:scaleX(0.880);transform-origin:100% 50%;">14.2408</div>
<div class="t" style="right:412px;top:333px;line-height:13px;text-align:right;transform:scaleX(0.880);transform-origin:100% 50%;">14.2408</div>
<div class="t" style="right:355px;top:333px;line-height:13px;text-align:right;transform:scaleX(0.880);transform-origin:100% 50%;">SSB</div>
<div class="t" style="right:286px;top:333px;line-height:13px;text-align:right;transform:scaleX(0.860);transform-origin:100% 50%;">Bill</div>
<div class="t" style="right:168px;top:333px;line-height:13px;text-align:right;transform:scaleX(0.941);transform-origin:100% 50%;">7/29/2008&nbsp;&nbsp; 02:26</div>
<div class="t" style="right:80px;top:333px;line-height:13px;text-align:right;transform:scaleX(0.870);transform-origin:100% 50%;">59</div>
<div class="t" style="right:39px;top:333px;line-height:13px;text-align:right;transform:scaleX(0.870);transform-origin:100% 50%;">59</div>
<svg style="position:absolute;left:0;top:0" width="723" height="420"><polygon points="22,334 28,339.5 22,345" fill="#000"/></svg>
<div style="left:699px;top:151px;width:18px;height:196px;background:#F3F1EA"></div>
<div style="left:699px;top:151px;width:17px;height:16px;background:#ECE9D8;box-shadow:inset 1px 1px 0 #fff, inset -1px -1px 0 #716F64, inset 2px 2px 0 #F1EFE2, inset -2px -2px 0 #ACA899"></div>
<svg style="position:absolute;left:0;top:0" width="723" height="420"><polygon points="703.5,162 711.5,162 707.5,158" fill="#000"/></svg>
<div style="left:699px;top:323px;width:17px;height:8px;background:#ECE9D8;box-shadow:inset 1px 1px 0 #fff, inset -1px -1px 0 #716F64, inset 2px 2px 0 #F1EFE2, inset -2px -2px 0 #ACA899"></div>
<div style="left:699px;top:331px;width:17px;height:16px;background:#ECE9D8;box-shadow:inset 1px 1px 0 #fff, inset -1px -1px 0 #716F64, inset 2px 2px 0 #F1EFE2, inset -2px -2px 0 #ACA899"></div>
<svg style="position:absolute;left:0;top:0" width="723" height="420"><polygon points="703.5,336 711.5,336 707.5,340" fill="#000"/></svg>
<div style="left:12px;top:347px;width:687px;height:16px;background:#F3F1EA"></div>
<div style="left:12px;top:347px;width:5px;height:16px;background:#000"></div>
<div style="left:17px;top:347px;width:17px;height:16px;background:#ECE9D8;box-shadow:inset 1px 1px 0 #fff, inset -1px -1px 0 #716F64, inset 2px 2px 0 #F1EFE2, inset -2px -2px 0 #ACA899"></div>
<div style="left:34px;top:347px;width:36px;height:16px;background:#ECE9D8;box-shadow:inset 1px 1px 0 #fff, inset -1px -1px 0 #716F64, inset 2px 2px 0 #F1EFE2, inset -2px -2px 0 #ACA899"></div>
<div style="left:682px;top:347px;width:17px;height:16px;background:#ECE9D8;box-shadow:inset 1px 1px 0 #fff, inset -1px -1px 0 #716F64, inset 2px 2px 0 #F1EFE2, inset -2px -2px 0 #ACA899"></div>
<div style="left:699px;top:347px;width:17px;height:16px;background:#D4D0C8"></div>
<svg style="position:absolute;left:0;top:0" width="723" height="420"><polygon points="28,351 28,359 24,355" fill="#000"/><polygon points="688,351 688,359 692,355" fill="#000"/></svg>
<div style="left:10px;top:375px;width:180px;height:1px;background:#ACA899"></div>
<div style="left:10px;top:375px;width:1px;height:34px;background:#ACA899"></div>
<div style="left:10px;top:408px;width:180px;height:1px;background:#ACA899"></div>
<div style="left:189px;top:375px;width:1px;height:34px;background:#ACA899"></div>
<div style="left:11px;top:376px;width:178px;height:1px;background:#fff"></div>
<div style="left:11px;top:376px;width:1px;height:32px;background:#fff"></div>
<div style="left:10px;top:409px;width:181px;height:1px;background:#fff"></div>
<div style="left:190px;top:375px;width:1px;height:35px;background:#fff"></div>
<div class="t b" style="left:17px;top:369px;padding:0 2px;line-height:14px;transform:scaleX(0.93);background:#ECE9D8;color:#1A10B8">Sort</div>
<svg style="position:absolute;left:19px;top:388px" width="12" height="12"><circle cx="6" cy="5.6" r="5.2" fill="#fff"/><path d="M9.6,2.0 A5.0,5.0 0 0 0 2.4,9.2" stroke="#8A887C" stroke-width="1.9" fill="none"/><circle cx="6" cy="5.6" r="2.1" fill="#000"/></svg>
<div class="t" style="left:37px;top:388px;line-height:13px;transform:scaleX(0.880);transform-origin:0 50%;">UTC</div>
<svg style="position:absolute;left:67px;top:388px" width="12" height="12"><circle cx="6" cy="5.6" r="5.2" fill="#fff"/><path d="M9.6,2.0 A5.0,5.0 0 0 0 2.4,9.2" stroke="#8A887C" stroke-width="1.9" fill="none"/></svg>
<div class="t" style="left:85px;top:388px;line-height:13px;transform:scaleX(0.857);transform-origin:0 50%;">Call</div>
<svg style="position:absolute;left:115px;top:388px" width="12" height="12"><circle cx="6" cy="5.6" r="5.2" fill="#fff"/><path d="M9.6,2.0 A5.0,5.0 0 0 0 2.4,9.2" stroke="#8A887C" stroke-width="1.9" fill="none"/></svg>
<svg style="position:absolute;left:0;top:0" width="723" height="420"><path d="M134.5,389 V397.5 M137.5,389 V397.5 M132.8,391.5 H139.2 M132.8,394.5 H139.2" stroke="#111" stroke-width="1.2" fill="none"/></svg>
<svg style="position:absolute;left:147px;top:388px" width="12" height="12"><circle cx="6" cy="5.6" r="5.2" fill="#fff"/><path d="M9.6,2.0 A5.0,5.0 0 0 0 2.4,9.2" stroke="#8A887C" stroke-width="1.9" fill="none"/></svg>
<div class="t" style="left:164px;top:388px;line-height:13px;transform:scaleX(0.855);transform-origin:0 50%;">Adv</div>
<div style="left:194px;top:375px;width:440px;height:1px;background:#ACA899"></div>
<div style="left:194px;top:375px;width:1px;height:34px;background:#ACA899"></div>
<div style="left:194px;top:408px;width:440px;height:1px;background:#ACA899"></div>
<div style="left:633px;top:375px;width:1px;height:34px;background:#ACA899"></div>
<div style="left:195px;top:376px;width:438px;height:1px;background:#fff"></div>
<div style="left:195px;top:376px;width:1px;height:32px;background:#fff"></div>
<div style="left:194px;top:409px;width:441px;height:1px;background:#fff"></div>
<div style="left:634px;top:375px;width:1px;height:35px;background:#fff"></div>
<div class="t b" style="left:201px;top:369px;padding:0 2px;line-height:14px;transform:scaleX(0.99);background:#ECE9D8;color:#1A10B8">Filter: None</div>
<div style="left:200px;top:385px;width:92px;height:15px;background:#fff;border-style:solid;border-width:1px;border-color:#ACA899 #fff #fff #ACA899;box-shadow:inset 1px 1px 0 #716F64, inset -1px -1px 0 #F1EFE2;padding:1px"></div>
<div style="left:204px;top:389px;width:1px;height:12px;background:#000"></div>
<div style="left:297px;top:385px;width:19px;height:19px;background:#ECE9D8;box-shadow:inset 1px 1px 0 #fff, inset -1px -1px 0 #716F64, inset 2px 2px 0 #F1EFE2, inset -2px -2px 0 #ACA899"></div>
<svg style="position:absolute;left:0;top:0" width="723" height="420"><path d="M303,389 L310.5,397.5 M310.5,389 L303,397.5" stroke="#2a2a2a" stroke-width="1.15" fill="none"/></svg>
<div style="left:322px;top:385px;width:33px;height:19px;background:#ECE9D8;box-shadow:inset 1px 1px 0 #fff, inset -1px -1px 0 #716F64, inset 2px 2px 0 #F1EFE2, inset -2px -2px 0 #ACA899"></div>
<div class="t" style="left:322px;top:388px;width:33px;line-height:13px;text-align:center;transform:scaleX(0.857);">Call</div>
<div style="left:362px;top:385px;width:33px;height:19px;background:#ECE9D8;box-shadow:inset 1px 1px 0 #fff, inset -1px -1px 0 #716F64, inset 2px 2px 0 #F1EFE2, inset -2px -2px 0 #ACA899"></div>
<div class="t" style="left:362px;top:388px;width:33px;line-height:13px;text-align:center;transform:scaleX(0.858);">Sel</div>
<div style="left:402px;top:385px;width:33px;height:19px;background:#ECE9D8;box-shadow:inset 1px 1px 0 #fff, inset -1px -1px 0 #716F64, inset 2px 2px 0 #F1EFE2, inset -2px -2px 0 #ACA899"></div>
<div class="t" style="left:402px;top:388px;width:33px;line-height:13px;text-align:center;transform:scaleX(0.880);">UTC</div>
<div style="left:442px;top:385px;width:43px;height:19px;background:#ECE9D8;box-shadow:inset 1px 1px 0 #fff, inset -1px -1px 0 #716F64, inset 2px 2px 0 #F1EFE2, inset -2px -2px 0 #ACA899"></div>
<div class="t" style="left:442px;top:388px;width:43px;line-height:13px;text-align:center;transform:scaleX(0.880);">DXCC</div>
<div style="left:490px;top:385px;width:40px;height:19px;background:#ECE9D8;box-shadow:inset 1px 1px 0 #fff, inset -1px -1px 0 #716F64, inset 2px 2px 0 #F1EFE2, inset -2px -2px 0 #ACA899"></div>
<div class="t" style="left:490px;top:388px;width:40px;line-height:13px;text-align:center;transform:scaleX(0.866);">LotW</div>
<div style="left:538px;top:385px;width:41px;height:19px;background:#ECE9D8;box-shadow:inset 1px 1px 0 #fff, inset -1px -1px 0 #716F64, inset 2px 2px 0 #F1EFE2, inset -2px -2px 0 #ACA899"></div>
<div class="t" style="left:538px;top:388px;width:41px;line-height:13px;text-align:center;transform:scaleX(0.890);">SQL 1</div>
<div style="left:586px;top:385px;width:41px;height:19px;background:#ECE9D8;box-shadow:inset 1px 1px 0 #fff, inset -1px -1px 0 #716F64, inset 2px 2px 0 #F1EFE2, inset -2px -2px 0 #ACA899"></div>
<div class="t" style="left:586px;top:388px;width:41px;line-height:13px;text-align:center;transform:scaleX(0.850);">Broke</div>
</body></html>
